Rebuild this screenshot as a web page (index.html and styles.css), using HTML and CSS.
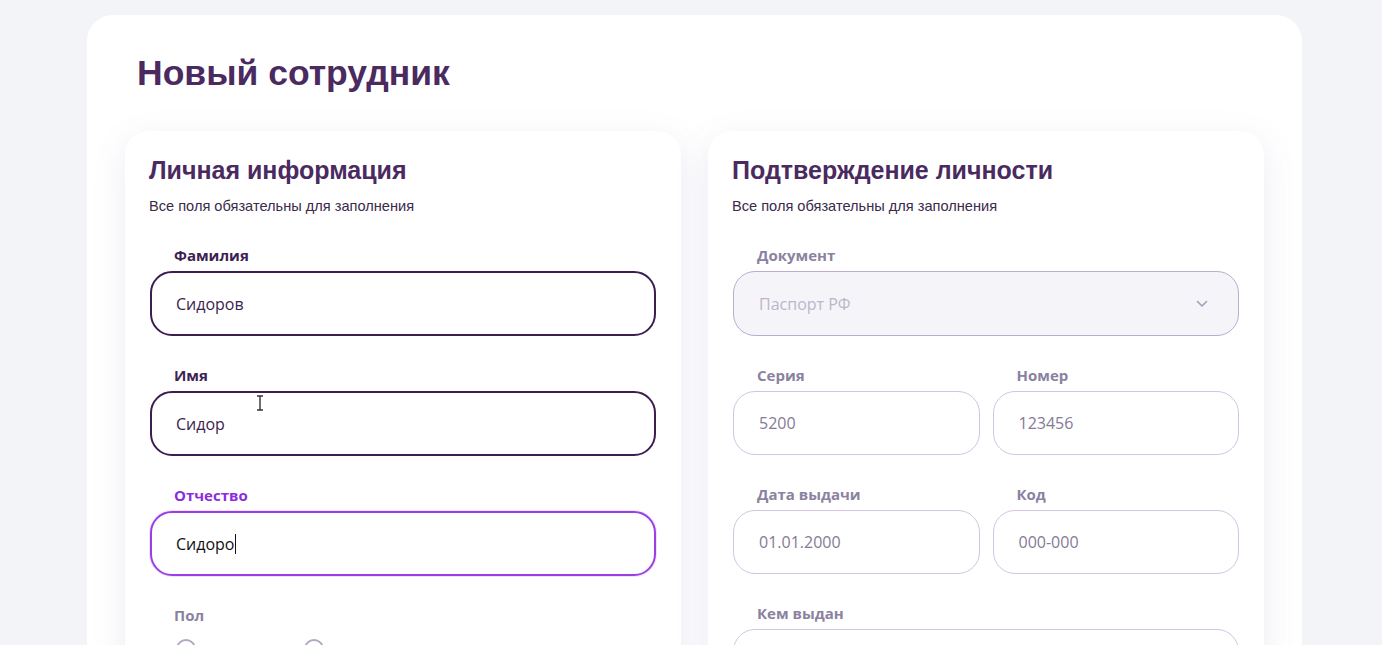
FILE: index.html
```html
<!DOCTYPE html>
<html lang="ru">
<head>
<meta charset="utf-8">
<title>Новый сотрудник</title>
<link rel="stylesheet" href="styles.css">
</head>
<body>
<div class="page">
  <main class="card">
    <h1 class="title">Новый сотрудник</h1>
    <div class="panels">
      <section class="panel">
        <h2 class="panel-title">Личная информация</h2>
        <p class="panel-sub">Все поля обязательны для заполнения</p>
        <div class="field">
          <div class="label">Фамилия</div>
          <div class="box box-dark">Сидоров</div>
        </div>
        <div class="field">
          <div class="label">Имя</div>
          <div class="box box-dark">Сидор</div>
          <svg class="ibeam" width="8" height="16" viewBox="0 0 8 16"><path d="M1 1h6M1 15h6M4 1v14" stroke="#333" stroke-width="1.4" fill="none"/></svg>
        </div>
        <div class="field">
          <div class="label label-focus">Отчество</div>
          <div class="box box-focus">Сидоро<span class="caret"></span></div>
        </div>
        <div class="field">
          <div class="label label-muted">Пол</div>
          <div class="radios">
            <span class="radio"></span>
            <span class="radio"></span>
          </div>
        </div>
      </section>
      <section class="panel">
        <h2 class="panel-title">Подтверждение личности</h2>
        <p class="panel-sub">Все поля обязательны для заполнения</p>
        <div class="field">
          <div class="label label-muted">Документ</div>
          <div class="box box-select">
            <span>Паспорт РФ</span>
            <svg class="chev" width="12" height="8" viewBox="0 0 12 8"><path d="M1.5 1.5L6 6l4.5-4.5" stroke="#a99bbb" stroke-width="1.6" fill="none" stroke-linecap="round" stroke-linejoin="round"/></svg>
          </div>
        </div>
        <div class="row">
          <div class="field">
            <div class="label label-muted">Серия</div>
            <div class="box box-light">5200</div>
          </div>
          <div class="field">
            <div class="label label-muted">Номер</div>
            <div class="box box-light">123456</div>
          </div>
        </div>
        <div class="row">
          <div class="field">
            <div class="label label-muted">Дата выдачи</div>
            <div class="box box-light">01.01.2000</div>
          </div>
          <div class="field">
            <div class="label label-muted">Код</div>
            <div class="box box-light">000-000</div>
          </div>
        </div>
        <div class="field">
          <div class="label label-muted">Кем выдан</div>
          <div class="box box-light"></div>
        </div>
      </section>
    </div>
  </main>
</div>
</body>
</html>
```

FILE: styles.css
```css
* { box-sizing: border-box; }
html, body { margin: 0; padding: 0; }
body {
  background: #f3f4f8;
  font-family: "Liberation Sans", Arial, sans-serif;
  overflow: hidden;
  height: 645px;
}
.page {
  padding: 15px 0 0 87px;
}
.card {
  width: 1215px;
  background: #ffffff;
  border-radius: 26px;
  padding: 0 38px 40px 38px;
  min-height: 800px;
}
.title {
  margin: 0;
  padding: 38px 0 0 12px;
  font-size: 35.5px;
  line-height: 40px;
  font-weight: 700;
  color: #4a2a5f;
}
.panels {
  display: grid;
  grid-template-columns: 1fr 1fr;
  gap: 27px;
  margin-top: 38px;
}
.panel {
  position: relative;
  background: #fff;
  border-radius: 24px;
  padding: 24px 25px 40px 25px;
  box-shadow: 0 10px 34px rgba(110, 110, 170, 0.13);
  min-height: 700px;
}
.panel-title {
  margin: 0 0 0 -1px;
  font-size: 25px;
  line-height: 30px;
  font-weight: 700;
  color: #4a2a5f;
}
.panel-sub {
  margin: 12px 0 30px -1px;
  font-size: 14.6px;
  line-height: 18px;
  color: #3a2a4c;
}
.field {
  position: relative;
  display: flex;
  flex-direction: column;
  margin-bottom: 29px;
}
.label {
  font-family: "Open Sans", "Noto Sans", sans-serif;
  font-weight: 700;
  font-size: 15px;
  line-height: 20px;
  height: 20px;
  padding-left: 24px;
  margin-bottom: 6px;
  color: #3d2152;
}
.label-focus { color: #8a2de0; }
.label-muted { color: #8a82a0; }
.box {
  display: flex;
  align-items: center;
  height: 65px;
  border-radius: 22px;
  padding: 0 24px;
  font-family: "Open Sans", "Noto Sans", sans-serif;
  font-size: 16px;
  background: #fff;
}
.box-dark {
  border: 2px solid #3b1d4f;
  color: #3b2350;
}
.box-focus {
  border: 2px solid #9a3fe3;
  color: #111;
  box-shadow: 0 0 0 1px rgba(154, 63, 227, 0.15);
}
.caret {
  display: inline-block;
  width: 1px;
  height: 20px;
  background: #111;
  margin-left: 1px;
}
.box-select {
  justify-content: space-between;
  border: 1px solid #bcaccf;
  background: #f4f4f9;
  color: #bfb4cb;
  padding: 0 30px 0 25px;
}
.box-light {
  height: 64px;
  border: 1px solid #d2c5e2;
  color: #857a96;
  padding: 0 25px;
}
.row {
  display: grid;
  grid-template-columns: 1fr 1fr;
  gap: 13px;
}
.radios {
  display: flex;
  gap: 108px;
  padding-left: 26px;
  margin-top: 8px;
}
.radio {
  width: 20px;
  height: 20px;
  border-radius: 50%;
  border: 2px solid #b3a6c4;
}
.ibeam {
  position: absolute;
  left: 106px;
  top: 30px;
}
```
